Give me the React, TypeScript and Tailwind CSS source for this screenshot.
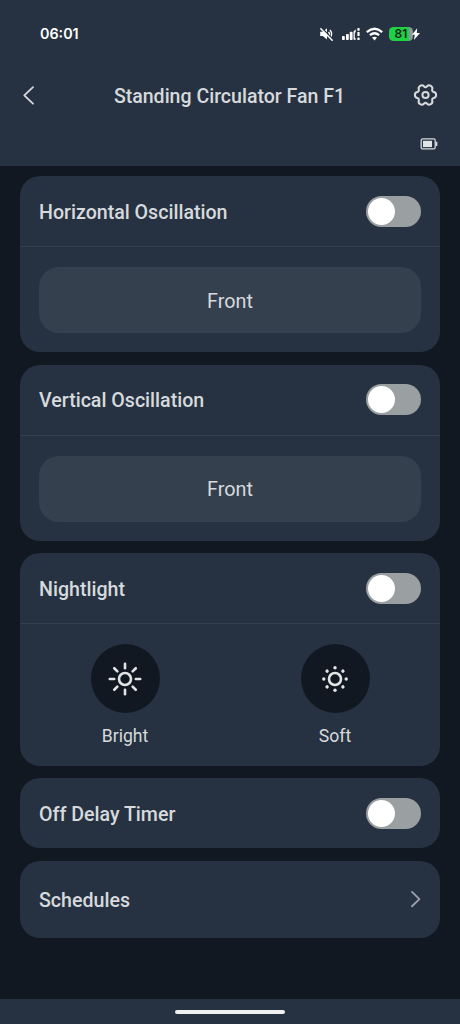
import React from "react";

type cardProps = {
    title: string;
    className: string;
    children?: React.ReactNode;
}

type modeProps = {
    label: string;
    children: React.ReactNode;
}

const angles = [0, 45, 90, 135, 180, 225, 270, 315];

const Toggle = () => {
    return (
        <button aria-label="toggle" className="w-[55px] h-[31px] rounded-full bg-[#9a9fa1] pl-[2.3px] flex items-center">
            <span className="block size-[27px] rounded-full bg-white"></span>
        </button>
    )
}

const ToggleCard = ({ title, className, children }: cardProps) => {
    return (
        <section className={`rounded-[20px] bg-[#263241] shrink-0 ${className}`}>
            <div className="h-[70px] pl-[19px] pr-[19px] flex items-center justify-between">
                <h2 className="text-[19.6px] leading-6 font-medium pt-[3px]">{title}</h2>
                <Toggle />
            </div>
            {children}
        </section>
    )
}

const Direction = () => {
    return (
        <div className="border-t border-[#333f4e] pt-5 px-[19px]">
            <button className="w-full h-[66px] rounded-[20px] bg-[#35404f] text-[19.8px] flex items-center justify-center pt-[3px]">Front</button>
        </div>
    )
}

const Mode = ({ label, children }: modeProps) => {
    return (
        <div className="w-1/2 flex flex-col items-center">
            <div className="size-[69px] rounded-full bg-[#111822] flex items-center justify-center">
                <svg width="40" height="40" viewBox="-20 -20 40 40" fill="none" stroke="#e2e4e6" strokeLinecap="round">
                    {children}
                </svg>
            </div>
            <span className="text-[17.6px] leading-6 mt-[11px]">{label}</span>
        </div>
    )
}

const StatusBar = () => {
    return (
        <div className="h-[68px] pl-10 pr-10 flex items-center justify-between text-white">
            <span className="font-[Inter,sans-serif] text-[14.3px] font-semibold">06:01</span>
            <div className="flex items-center">
                <svg width="16" height="16" viewBox="0 0 16 16" className="mr-1.5">
                    <path d="M.2 5.8h2.6L7 2.3v11.2l-4.2-3.4H.2z" fill="#fff" />
                    <path d="M8.6 5.9q1.6 2 0 4.2M10 3.9q3.2 4 0 8.2" fill="none" stroke="#fff" strokeWidth="1.4" />
                    <path d="M1.6 1.7l11.6 12" stroke="#263241" strokeWidth="1.4" />
                    <path d="M.8 2.7l11.4 11.6" stroke="#fff" strokeWidth="1.5" strokeLinecap="round" />
                </svg>
                <svg width="18" height="14" viewBox="0 0 18 14" className="mr-[6px]" fill="#fff">
                    <rect x="0" y="9" width="2.8" height="4" rx=".8" />
                    <rect x="4" y="7" width="2.8" height="6" rx=".8" />
                    <rect x="7.8" y="4.8" width="2.8" height="8.2" rx=".8" />
                    <path d="M11.5 12.8V4.5l2.2-2.2v2.8l-.9 1v4.4l.9 1v1.3z" />
                    <rect x="15.4" y="1" width="2.2" height="2.8" rx=".6" />
                    <rect x="15.4" y="5" width="2.2" height="4" rx=".6" />
                    <rect x="15.4" y="10.6" width="2.2" height="2.4" rx=".6" />
                </svg>
                <svg width="17" height="14" viewBox="0 0 17 14" className="mr-[6px]" fill="none" stroke="#fff" strokeWidth="2.3">
                    <path d="M.8 5.1q7.7-6.6 15.4 0M3.9 8.2q4.6-3.9 9.2 0" />
                    <path d="M8.5 13.4L6 10.6q2.5-1.9 5 0z" fill="#fff" stroke="none" />
                </svg>
                <div className="w-[24px] h-[14px] rounded-[4.5px] bg-[linear-gradient(90deg,#1fd144_85%,#8f979d_85%)] text-[#10251b] font-[Inter,sans-serif] text-[12px] font-semibold leading-[14px] text-center">81</div>
                <svg width="8" height="12" viewBox="0 0 8 12" className="-ml-px">
                    <path d="M5.2.2L0 6.8h2.8l-.9 5.2L8 4.9H4.8z" fill="#fff" />
                </svg>
            </div>
        </div>
    )
}

const App = () => {
    return (
        <div className="w-full h-[1024px] bg-[#111822] text-[#d7dadd] font-[Roboto,sans-serif] flex flex-col overflow-hidden">
            <header className="h-[166px] shrink-0 bg-[#263241]">
                <StatusBar />
                <div className="h-[55px] pl-[22px] pr-[22px] flex items-center justify-between">
                    <svg width="24" height="24" viewBox="0 0 24 24" fill="none" stroke="#d7dadd" strokeWidth="1.8" strokeLinecap="round" strokeLinejoin="round">
                        <path d="M11 3.2L2.3 11.4l8.7 8.2" />
                    </svg>
                    <h1 className="text-[19.55px] leading-6 font-medium pt-[3px]">Standing Circulator Fan F1</h1>
                    <svg width="25" height="25" viewBox="-12.5 -12 25 25" fill="none" stroke="#d7dadd" strokeWidth="2">
                        <path d="M10.62 0Q10.62 2.45 8.34 2.98Q6.06 3.5 6.75 5.74Q7.43 7.97 5.31 9.2Q3.19 10.42 1.6 8.71Q0 7-1.6 8.71Q-3.19 10.42-5.31 9.2Q-7.43 7.97-6.75 5.74Q-6.06 3.5-8.34 2.98Q-10.62 2.45-10.62 0Q-10.62-2.45-8.34-2.98Q-6.06-3.5-6.75-5.74Q-7.43-7.97-5.31-9.2Q-3.19-10.42-1.6-8.71Q0-7 1.6-8.71Q3.19-10.42 5.31-9.2Q7.43-7.97 6.75-5.74Q6.06-3.5 8.34-2.98Q10.62-2.45 10.62 0Z" />
                        <circle r="3.1" />
                    </svg>
                </div>
                <div className="flex justify-end pr-[22px] pt-[15px]">
                    <svg width="18" height="12" viewBox="0 0 18 12" fill="none" stroke="#d7dadd">
                        <rect x="1.2" y=".9" width="14" height="10" rx="1.5" strokeWidth="1.3" />
                        <rect x="3" y="2.8" width="9" height="6.3" fill="#e2e4e6" stroke="none" />
                        <path d="M16.6 3.8v4.2" strokeWidth="1.5" />
                    </svg>
                </div>
            </header>

            <main className="flex-1 px-5 pt-[10.3px] flex flex-col gap-[12.5px]">
                <ToggleCard title="Horizontal Oscillation" className="h-[176px]">
                    <Direction />
                </ToggleCard>
                <ToggleCard title="Vertical Oscillation" className="h-[176px]">
                    <Direction />
                </ToggleCard>
                <ToggleCard title="Nightlight" className="h-[212.5px]">
                    <div className="border-t border-[#333f4e] pt-5 flex">
                        <Mode label="Bright">
                            <circle r="6" strokeWidth="2.6" />
                            {angles.map((a) => (
                                <path key={a} d="M0-15.2V-10.8" strokeWidth="2.6" transform={`rotate(${a})`} />
                            ))}
                        </Mode>
                        <Mode label="Soft">
                            <circle r="6" strokeWidth="2.6" />
                            {angles.map((a) => (
                                <circle key={a} cy="-11.2" r="1.7" fill="#e2e4e6" stroke="none" transform={`rotate(${a})`} />
                            ))}
                        </Mode>
                    </div>
                </ToggleCard>
                <ToggleCard title="Off Delay Timer" className="h-[70px]" />
                <section className="h-[77px] shrink-0 rounded-[20px] bg-[#263241] pl-[19px] pr-[19px] flex items-center justify-between">
                    <h2 className="text-[19.6px] leading-6 font-medium pt-[3px]">Schedules</h2>
                    <svg width="11" height="18" viewBox="0 0 11 18" fill="none" stroke="#9a9fa8" strokeWidth="1.9" strokeLinecap="round" strokeLinejoin="round">
                        <path d="M2 1.9l7.4 7.2L2 16.3" />
                    </svg>
                </section>
            </main>

            <footer className="h-[25px] shrink-0 bg-[#263241] flex justify-center pt-[11px]">
                <div className="w-[110px] h-[3.5px] rounded-full bg-[#eef0f2]"></div>
            </footer>
        </div>
    )
}

export default App;
